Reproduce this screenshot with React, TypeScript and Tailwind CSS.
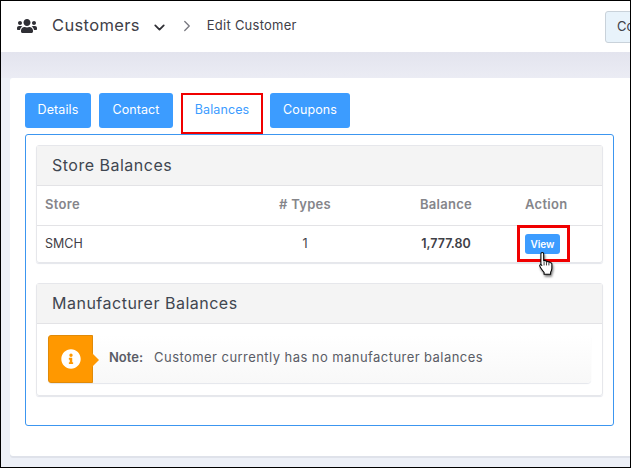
import React from 'react';
import { ChevronDown, ChevronRight } from 'lucide-react';
import { FaUsers, FaInfoCircle } from 'react-icons/fa';

function TabButton({ label, width }: { label: string; width: string }) {
  return (
    <button className={`${width} h-[35px] bg-[#3c9cff] rounded-[3px] text-white text-[12.5px] tracking-[0.1px] flex items-center justify-center`}>
      {label}
    </button>
  );
}

function HandCursor() {
  return (
    <svg width="20" height="25" viewBox="0 0 20 26" className="absolute left-[42px] top-[17px] drop-shadow-[1px_2px_1px_rgba(0,0,0,0.5)]">
      <path
        d="M6 1.5c1 0 1.6.7 1.6 1.7v7l1-.2c.8-.1 1.4.2 1.6.8.8-.4 1.7-.2 2 .6.9-.3 1.8 0 2.1.8.8-.2 1.7.3 1.8 1.3v4.5c0 1.6-.6 2.8-1.3 4v2.2H8v-2c-1.2-1.2-2.5-3.2-4-5.4-.6-.9-1-1.7-.3-2.3.7-.6 1.5-.2 2 .4l-1-.9V3.2c0-1 .4-1.7 1.3-1.7z"
        fill="#fff"
        stroke="#000"
        strokeWidth="1.1"
        strokeLinejoin="round"
      />
      <path d="M8 11v4M10.5 11v4M13 12v3" stroke="#000" strokeWidth="0.8" fill="none" />
    </svg>
  );
}

export default function App() {
  return (
    <div className="w-[631px] h-[468px] border border-black overflow-hidden flex flex-col bg-[#edf0f7] font-['Inter','Liberation_Sans',sans-serif] text-[#3f4047]">
      <header className="h-[51px] shrink-0 bg-white flex items-center pl-[16px] pb-[2px]">
        <FaUsers className="w-[20px] h-[20px] text-[#2f2f35]" />
        <span className="ml-[15px] text-[16.5px] tracking-[0.35px]">Customers</span>
        <ChevronDown className="ml-[11px] mt-[3px] w-[17px] h-[17px] text-[#2f2f35]" strokeWidth={2.5} />
        <ChevronRight className="ml-[10px] w-[18px] h-[18px] text-[#77777f]" strokeWidth={1.75} />
        <span className="ml-[11px] text-[13px] tracking-[0.25px]">Edit Customer</span>
        <div className="ml-auto -mr-[7px] h-[32px] w-[32px] shrink-0 mt-[2px] bg-[#e8f3fb] border border-[#c9d2da] rounded-[3px] text-[13px] flex items-center pl-[11px]">
          Co
        </div>
      </header>

      <div className="h-[26px] shrink-0 bg-gradient-to-b from-[#e3e4ee] to-[#ebecf4]" />

      <main className="flex-1 ml-[9px] -mr-[4px] bg-white rounded-tl-[3px] rounded-bl-[3px] shadow-[0_2px_0_#dfe2ea] pl-[15px] pt-[15px]">
        <nav className="flex items-start h-[41px]">
          <TabButton label="Details" width="w-[66px]" />
          <div className="w-[8px]" />
          <TabButton label="Contact" width="w-[74px]" />
          <div className="w-[8px]" />
          <button className="w-[82px] h-[41px] border-2 border-[#f00000] text-[#3c9cff] text-[12.5px] tracking-[0.1px] pb-[7px]">Balances</button>
          <div className="w-[7px]" />
          <TabButton label="Coupons" width="w-[80px]" />
        </nav>

        <section className="w-[589px] h-[292px] border border-[#3c96f0] rounded-[3px] px-[10px] pt-[10px]">
          <div className="border border-[#e6e7eb] rounded-[3px] shadow-[0_1px_1px_#e4e6ec]">
            <h2 className="h-[40px] pb-[2px] bg-[#f4f4f4] border-b border-[#e3e3e6] pl-[15px] flex items-center text-[16px] tracking-[0.5px] text-[#3f4650]">Store Balances</h2>
            <div className="h-[40px] pb-[2px] grid grid-cols-[175px_186px_96px_1fr] items-center text-[13px] tracking-[0.3px] font-semibold text-[#85858a] border-b border-[#e3e3e6]">
              <span className="pl-[8px]">Store</span>
              <span className="text-center"># Types</span>
              <span className="text-center">Balance</span>
              <span className="pl-[31px]">Action</span>
            </div>
            <div className="h-[36px] grid grid-cols-[175px_186px_96px_1fr] items-center text-[12.5px]">
              <span className="pl-[8px]">SMCH</span>
              <span className="text-center">1</span>
              <span className="text-center font-semibold">1,777.80</span>
              <span className="pl-[31px] relative">
                <button className="w-[35px] h-[20px] bg-[#3c9cff] rounded-[3px] text-white text-[10px] font-semibold flex items-center justify-center">View</button>
                <span className="absolute left-[23px] -top-[9px] w-[53px] h-[37px] border-[3px] border-[#f00000] pointer-events-none" />
                <HandCursor />
              </span>
            </div>
          </div>

          <div className="mt-[20px] border border-[#e6e7eb] rounded-[3px] shadow-[0_1px_1px_#e4e6ec]">
            <h2 className="h-[40px] pb-[2px] bg-[#f4f4f4] border-b border-[#e3e3e6] pl-[15px] flex items-center text-[16px] tracking-[0.5px] text-[#3f4650]">Manufacturer Balances</h2>
            <div className="h-[71px] px-[11px] pt-[11px]">
              <div className="h-[48px] flex items-center bg-gradient-to-b from-white to-[#f8f8f8] rounded-[4px] shadow-[0_1px_1px_#e4e6ec] pb-[2px]">
                <div className="relative w-[45px] h-[48px] -mb-[2px] shrink-0 bg-[#ff9800] border border-[#e08a08] rounded-l-[3px] flex items-center justify-center">
                  <FaInfoCircle className="w-[20px] h-[20px] text-white" />
                  <span className="absolute -right-[7px] top-[17px] w-0 h-0 border-y-[7px] border-y-transparent border-l-[7px] border-l-[#ff9800]" />
                </div>
                <span className="ml-[16px] text-[13px] font-semibold text-[#5a5c66]">Note:</span>
                <span className="ml-[11px] text-[13px] tracking-[0.44px] text-[#5a5c66]">Customer currently has no manufacturer balances</span>
              </div>
            </div>
          </div>
        </section>
      </main>
      <div className="h-[11px] shrink-0" />
    </div>
  );
}
